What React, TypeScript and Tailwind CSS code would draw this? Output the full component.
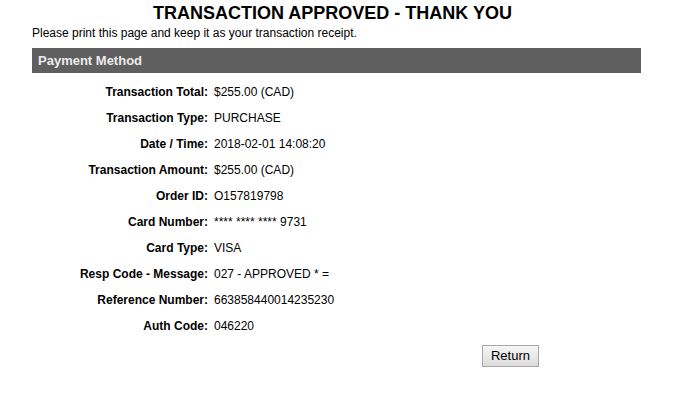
const rows: [string, string][] = [
  ["Transaction Total:", "$255.00 (CAD)"],
  ["Transaction Type:", "PURCHASE"],
  ["Date / Time:", "2018-02-01 14:08:20"],
  ["Transaction Amount:", "$255.00 (CAD)"],
  ["Order ID:", "O157819798"],
  ["Card Number:", "**** **** **** 9731"],
  ["Card Type:", "VISA"],
  ["Resp Code - Message:", "027 - APPROVED * ="],
  ["Reference Number:", "663858440014235230"],
  ["Auth Code:", "046220"],
];

export default function App() {
  return (
    <div className="min-h-[406px] w-[681px] bg-white font-['Liberation_Sans',Arial,sans-serif] text-black">
      <div className="ml-[32px] w-[609px]">
        <h1 className="pr-[8px] pt-[3px] text-center text-[18px] font-bold leading-[21px]">
          TRANSACTION APPROVED - THANK YOU
        </h1>
        <p className="mt-[2px] text-[12px] leading-[14px]">
          Please print this page and keep it as your transaction receipt.
        </p>
        <div className="mt-[8px] flex h-[25px] items-center bg-[#5f5f5f] px-[6px] text-[13px] font-bold text-[#ececec]">
          Payment Method
        </div>
        <div className="mt-[6px] flex flex-col">
          {rows.map(([label, value]) => (
            <div key={label} className="flex h-[26px] items-center text-[12px] leading-[14px]">
              <div className="w-[176px] text-right font-bold">{label}</div>
              <div className="ml-[6px]">{value}</div>
            </div>
          ))}
        </div>
        <div className="mt-[6px] flex">
          <button className="ml-[450px] h-[22px] w-[57px] border border-[#a8a8a8] bg-gradient-to-b from-[#f6f6f6] to-[#dcdcdc] text-[13px] leading-[20px]">
            Return
          </button>
        </div>
      </div>
    </div>
  );
}
